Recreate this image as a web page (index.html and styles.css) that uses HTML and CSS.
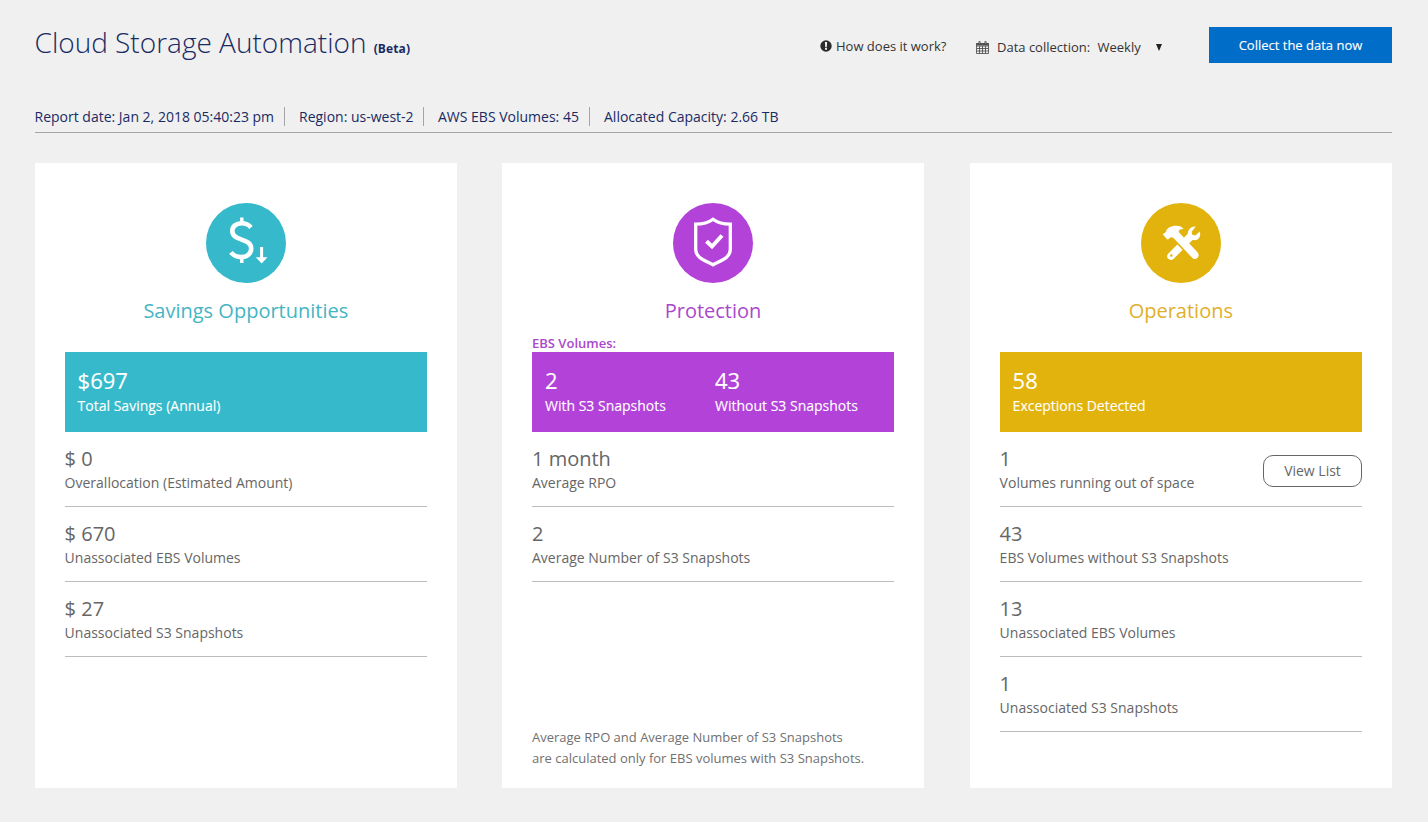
FILE: index.html
```html
<!DOCTYPE html>
<html lang="en">
<head>
<meta charset="utf-8">
<title>Cloud Storage Automation</title>
<link rel="stylesheet" href="styles.css">
</head>
<body>
<header class="header">
  <h1 class="title">Cloud Storage Automation <span class="beta">(Beta)</span></h1>
  <a class="help"><svg class="help-icon" viewBox="0 0 12 12"><circle cx="6" cy="6" r="5.7" fill="#2b2b2b"/><path d="M4.9 2h2.2l-.3 4.900H5.200zM5 7.800h2v1.900H5z" fill="#f0f0f0"/></svg><span>How does it work?</span></a>
  <div class="schedule">
    <svg class="calendar" viewBox="0 0 13 13"><path d="M.5 2.500h12v10H.5zM.5 5h12M.5 7.500h12M.5 10h12M3.500 5v7.500M6.500 5v7.500M9.500 5v7.500" fill="none" stroke="#444" stroke-width=".8"/><path d="M.3 2h12.400v2.500H.3z" fill="#555"/><path d="M3.500.3v3M9.500.3v3" stroke="#333" stroke-width="1.8"/><path d="M3.500.9v2M9.500.9v2" stroke="#ddd" stroke-width=".5"/></svg>
    <span class="schedule-label">Data collection:</span><span class="schedule-value">Weekly</span>
    <svg class="caret" viewBox="0 0 6 7"><path d="M0 0h6L3 7z" fill="#222"/></svg>
  </div>
  <button class="collect">Collect the data now</button>
</header>
<div class="facts">
  <span class="fact fact-date">Report date: Jan 2, 2018 05:40:23 pm</span>
  <span class="fact fact-region">Region: us-west-2</span>
  <span class="fact fact-volumes">AWS EBS Volumes: 45</span>
  <span class="fact">Allocated Capacity: 2.66 TB</span>
</div>
<main class="cards">
  <section class="card savings">
    <svg class="badge" viewBox="0 0 80 80"><circle cx="40" cy="40" r="40" fill="#36bacb"/><g fill="none" stroke="#fff"><path d="M45 24.400C42.500 21.500 39 20.300 35.500 20.300c-5.400 0-9.200 3-9.200 7.700 0 10.500 18.900 6.700 18.900 17.500 0 5-4.200 8.600-10 8.600-4.200 0-7.700-1.600-10.200-4.700" stroke-width="4.600"/><path d="M35.800 14.500v6M35.800 54v6" stroke-width="3.400"/></g><path d="M54.100 44h3v10.200h4.400L55.700 60.400 49.700 54.200h4.400z" fill="#fff"/></svg>
    <h2 class="heading">Savings Opportunities</h2>
    <div class="volumes-label"></div>
    <div class="banner"><div class="stat"><b>$697</b><span>Total Savings (Annual)</span></div></div>
    <div class="row"><div><b>$ 0</b><span>Overallocation (Estimated Amount)</span></div></div>
    <div class="row"><div><b>$ 670</b><span>Unassociated EBS Volumes</span></div></div>
    <div class="row"><div><b>$ 27</b><span>Unassociated S3 Snapshots</span></div></div>
  </section>
  <section class="card protection">
    <svg class="badge" viewBox="0 0 80 80"><circle cx="40" cy="40" r="40" fill="#b342d9"/><path d="M40 16.200C35 20 29.500 21.200 22.700 21.200V46.500C22.700 54.500 31 57 40 61.800 49 57 57.300 54.500 57.300 46.500V21.200C50.500 21.200 45 20 40 16.200z" fill="none" stroke="#fff" stroke-width="3.300"/><path d="M33.500 38.200l5.500 5.300L49 32.500" fill="none" stroke="#fff" stroke-width="4"/></svg>
    <h2 class="heading">Protection</h2>
    <div class="volumes-label">EBS Volumes:</div>
    <div class="banner"><div class="stat stat-half"><b>2</b><span>With S3 Snapshots</span></div><div class="stat"><b>43</b><span>Without S3 Snapshots</span></div></div>
    <div class="row"><div><b>1 month</b><span>Average RPO</span></div></div>
    <div class="row"><div><b>2</b><span>Average Number of S3 Snapshots</span></div></div>
    <p class="note">Average RPO and Average Number of S3 Snapshots<br>are calculated only for EBS volumes with S3 Snapshots.</p>
  </section>
  <section class="card operations">
    <svg class="badge" viewBox="0 0 80 80"><circle cx="40" cy="40" r="40" fill="#e2b30c"/><path d="M27.200 50.800L47.500 30 53 35.500 32.500 56C29 59 23.700 54.300 27.200 50.800z" fill="#fff"/><path d="M54.700 23.500C49.800 22.900 45.900 27.500 47 32c1 4.800 6 6.200 9.500 4.400 2.500-1.500 3.400-4.500 2.300-7.800l-4.500 4-3-.9-.6-3z" fill="#fff"/><circle cx="30.300" cy="52.500" r="1.200" fill="#e2b30c"/><path d="M33.700 37.500L53 57.800 58.300 52.500 38.500 32.500z" fill="#e2b30c" stroke="#e2b30c" stroke-width="1.600"/><path d="M21.700 31.300l3.300-2.400c.5-3.300 3.200-4.800 6.500-5.700 4.500-1.200 9.200-.2 11.200 2.900-3.300-.2-5 .7-5 2.900L56.700 49.500q2 3-.1 5.300-2.500 2.500-5.200.2L32.500 34.900c-2.300-1.400-3.700-.7-4.500 1.200l-1.700.3z" fill="#fff"/></svg>
    <h2 class="heading">Operations</h2>
    <div class="volumes-label"></div>
    <div class="banner"><div class="stat"><b>58</b><span>Exceptions Detected</span></div></div>
    <div class="row"><div><b>1</b><span>Volumes running out of space</span></div><button class="view">View List</button></div>
    <div class="row"><div><b>43</b><span>EBS Volumes without S3 Snapshots</span></div></div>
    <div class="row"><div><b>13</b><span>Unassociated EBS Volumes</span></div></div>
    <div class="row"><div><b>1</b><span>Unassociated S3 Snapshots</span></div></div>
  </section>
</main>
</body>
</html>
```
FILE: styles.css
```css
* { box-sizing: border-box; }
body { margin: 0; padding: 27px 36px 34px 35px; height: 822px; background: #f0f0f0; font-family: "Open Sans", sans-serif; font-size: 14px; color: #666; overflow: hidden; }
button { font-family: inherit; padding: 0; }
.header { display: flex; height: 80px; align-items: flex-start; color: #333; font-size: 13px; line-height: 18px; }
.title { margin: -4px auto 0 -0.5px; font-size: 28px; line-height: 38px; font-weight: 300; color: #1a2b63; white-space: nowrap; }
.beta { font-size: 12px; font-weight: 700; letter-spacing: 0.1px; }
.help { display: flex; align-items: center; width: 156px; padding-top: 10px; white-space: nowrap; }
.help-icon { width: 12px; height: 12px; margin-right: 4px; }
.schedule { display: flex; align-items: center; width: 233px; padding-top: 11px; white-space: nowrap; }
.calendar { width: 13px; height: 13px; margin-right: 8px; }
.schedule-label { width: 100.5px; }
.schedule-value { width: 58.5px; }
.caret { width: 6px; height: 7px; }
.collect { width: 183px; height: 36px; border: 0; background: #006dc9; color: #fff; font-size: 13px; -webkit-text-stroke: 0.12px #fff; }
.facts { display: flex; height: 26px; border-bottom: 1px solid #a5a5a5; color: #1a2b63; line-height: 19px; white-space: nowrap; }
.fact { height: 19px; margin-right: 14px; }
.fact-date { width: 250px; border-right: 1px solid #a5a5a5; text-indent: -0.5px; }
.fact-region { width: 125px; border-right: 1px solid #a5a5a5; }
.fact-volumes { width: 152px; border-right: 1px solid #a5a5a5; }
.cards { display: grid; grid-template-columns: 422px 422px 422px; column-gap: 45px; margin-top: 30px; height: 625px; }
.operations { margin-left: 1px; margin-right: -1px; }
.card { display: flex; flex-direction: column; background: #fff; padding: 40px 30px 19px; text-indent: -0.4px; }
.card.protection { text-indent: 0; }
.badge { width: 80px; height: 80px; align-self: center; flex: none; }
.heading { margin: 13px 0 0; font-size: 20px; line-height: 30px; font-weight: 400; text-align: center; }
.savings .heading { color: #45b5c3; }
.protection .heading, .volumes-label { color: #aa48cc; }
.operations .heading { color: #dfb02b; }
.volumes-label { height: 26px; padding-top: 8px; line-height: 18px; font-size: 13px; font-weight: 600; }
.banner { display: flex; height: 80px; padding: 15px 13px; color: #fff; }
.savings .banner { background: #36bacb; }
.protection .banner { background: #b342d9; }
.operations .banner { background: #e2b30c; }
.stat-half { width: 170px; }
b, .stat span, .row span { display: block; white-space: nowrap; }
.stat b { font-size: 22px; line-height: 27px; font-weight: 400; -webkit-text-stroke: 0.1px #fff; }
.stat span { line-height: 24px; -webkit-text-stroke: 0.12px #fff; }
.row { display: flex; justify-content: space-between; height: 75px; padding-top: 13px; border-bottom: 1px solid #bcbcbc; }
.row b { font-size: 20px; line-height: 27px; font-weight: 400; }
.row span { line-height: 21px; }
.view { width: 99px; height: 32px; margin-top: 10px; padding-bottom: 2px; border: 1px solid #666; border-radius: 10px; background: #fff; color: #666; font-size: 14px; }
.note { margin: auto 0 0; font-size: 13px; line-height: 21px; white-space: nowrap; color: #707070; }
```
